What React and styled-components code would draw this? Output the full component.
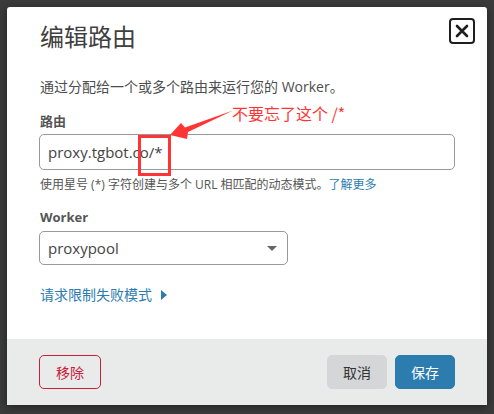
import React from "react";
import styled, { createGlobalStyle } from "styled-components";

const Global = createGlobalStyle`
  html, body {
    margin: 0;
    padding: 0;
    background: #3b3b3b;
  }
  * { box-sizing: border-box; }
`;

const Page = styled.div`
  position: relative;
  width: 494px;
  height: 414px;
  padding: 7px;
  background: #3b3b3b;
  font-family: "Open Sans", "Noto Sans CJK SC", sans-serif;
  overflow: hidden;
`;

const Modal = styled.div`
  width: 480px;
  height: 398px;
  background: #fff;
  border-radius: 3px 3px 0 0;
  display: flex;
  flex-direction: column;
  box-shadow: 0 2px 8px rgba(0, 0, 0, 0.45);
`;

const Header = styled.div`
  display: flex;
  justify-content: space-between;
  align-items: flex-start;
  padding: 11px 12px 0 33px;
`;

const Title = styled.h2`
  margin: 2px 0 0;
  font-size: 24px;
  line-height: 32px;
  font-weight: 400;
  color: #404040;
  font-family: "Noto Sans CJK SC", sans-serif;
`;

const Close = styled.button`
  width: 26px;
  height: 26px;
  padding: 0;
  border: 2px solid #1e1e1e;
  border-radius: 4px;
  background: #fff;
  display: flex;
  align-items: center;
  justify-content: center;
`;

const Body = styled.div`
  flex: 1;
  padding: 0 32px;
  display: flex;
  flex-direction: column;
`;

const Lead = styled.p`
  margin: 25px 0 0 1px;
  font-size: 14px;
  line-height: 20px;
  color: #4d4d4d;
`;

const Label = styled.div`
  margin: ${(p) => p.$top}px 0 0 1px;
  font-size: 13px;
  line-height: 20px;
  font-weight: 700;
  color: #555;
`;

const Field = styled.div`
  margin-top: ${(p) => p.$gap}px;
  width: ${(p) => p.$width};
  height: ${(p) => p.$height}px;
  border: 1px solid #999;
  border-radius: 5px;
  display: flex;
  align-items: center;
  justify-content: space-between;
  padding: 0 10px 0 8px;
  font-size: 15px;
  color: #444;
`;

const Caret = styled.span`
  width: 0;
  height: 0;
  border-left: 5px solid transparent;
  border-right: 5px solid transparent;
  border-top: 5px solid #666;
`;

const Help = styled.p`
  margin: 7px 0 0 1px;
  font-size: 12px;
  line-height: 16px;
  color: #555;
`;

const Link = styled.a`
  color: #2c7cb0;
  text-decoration: none;
`;

const Toggle = styled.div`
  margin: 20px 0 0 1px;
  display: flex;
  align-items: center;
  gap: 9px;
  font-size: 14px;
  line-height: 20px;
  color: #2c7cb0;
`;

const Arrow = styled.span`
  width: 0;
  height: 0;
  border-top: 5px solid transparent;
  border-bottom: 5px solid transparent;
  border-left: 6px solid #2c7cb0;
`;

const Footer = styled.div`
  height: 66px;
  background: #e9eaea;
  display: flex;
  align-items: center;
  justify-content: space-between;
  padding: 0 32px;
`;

const Group = styled.div`
  display: flex;
  gap: 8px;
`;

const Button = styled.button`
  height: 34px;
  width: ${(p) => p.$width}px;
  border-radius: 5px;
  font-family: "Noto Sans CJK SC", sans-serif;
  font-size: 14px;
  padding: 0;
  border: 1px solid ${(p) => p.$border};
  background: ${(p) => p.$bg};
  color: ${(p) => p.$color};
`;

const Overlay = styled.svg`
  position: absolute;
  left: 0;
  top: 0;
  pointer-events: none;
`;

const Note = styled.span`
  position: absolute;
  left: 232px;
  top: 103px;
  font-size: 16px;
  line-height: 20px;
  color: #ff3535;
  font-family: "Noto Sans CJK SC", sans-serif;
  white-space: nowrap;
`;

export default function App() {
  return (
    <Page>
      <Global />
      <Modal>
        <Header>
          <Title>编辑路由</Title>
          <Close>
            <svg width="14" height="14" viewBox="0 0 14 14">
              <path d="M2 2 L12 12 M12 2 L2 12" stroke="#1e1e1e" strokeWidth="2.6" strokeLinecap="round" />
            </svg>
          </Close>
        </Header>
        <Body>
          <Lead>通过分配给一个或多个路由来运行您的 Worker。</Lead>
          <Label $top={14}>路由</Label>
          <Field $gap={3} $width="100%" $height={36}>proxy.tgbot.co/*</Field>
          <Help>
            使用星号 (*) 字符创建与多个 URL 相匹配的动态模式。<Link>了解更多</Link>
          </Help>
          <Label $top={14}>Worker</Label>
          <Field $gap={4} $width="249px" $height={34}>
            proxypool
            <Caret />
          </Field>
          <Toggle>
            请求限制失败模式
            <Arrow />
          </Toggle>
        </Body>
        <Footer>
          <Button $width={62} $border="#c8203c" $bg="transparent" $color="#c8203c">移除</Button>
          <Group>
            <Button $width={60} $border="#d5d6d8" $bg="#d5d6d8" $color="#333">取消</Button>
            <Button $width={60} $border="#2c7cb0" $bg="#2c7cb0" $color="#fff">保存</Button>
          </Group>
        </Footer>
      </Modal>
      <Overlay width="494" height="414">
        <rect x="139.5" y="136.5" width="30" height="38" fill="none" stroke="#ff3535" strokeWidth="3" />
        <polygon points="170,135 181,123 185,127.5 233,110.5 188,132 187,139" fill="#ff3535" />
      </Overlay>
      <Note>不要忘了这个 /*</Note>
    </Page>
  );
}
